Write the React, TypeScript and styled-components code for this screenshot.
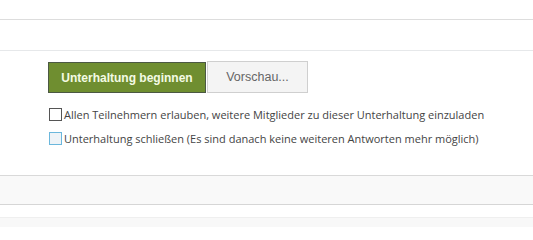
import React from "react";
import styled, { createGlobalStyle } from "styled-components";

const Global = createGlobalStyle`
  html, body { margin: 0; padding: 0; background: #ffffff; }
  body { font-family: "Open Sans", "Liberation Sans", sans-serif; }
`;

const Page = styled.div`
  width: 533px;
  height: 227px;
  overflow: hidden;
  display: flex;
  flex-direction: column;
`;

const Band = styled.div<{ $h: number; $bg?: string; $line?: string }>`
  height: ${(p) => p.$h}px;
  flex-shrink: 0;
  background: ${(p) => p.$bg || "#ffffff"};
  border-bottom: 1px solid ${(p) => p.$line || "transparent"};
`;

const Form = styled.div`
  height: 125px;
  flex-shrink: 0;
  padding: 11px 0 0 48px;
  box-sizing: border-box;
  border-bottom: 1px solid #d9d9d9;
`;

const ButtonRow = styled.div`
  display: flex;
  gap: 1px;
  height: 31px;
`;

const PrimaryButton = styled.button`
  width: 158px;
  height: 31px;
  margin: 0;
  padding: 0;
  background: #6f8e30;
  border: 1px solid #4b5843;
  color: #f4fbe4;
  font-family: "Liberation Sans", Arial, sans-serif;
  font-weight: bold;
  font-size: 12px;
  cursor: pointer;
`;

const SecondaryButton = styled.button`
  width: 101px;
  height: 32px;
  margin: -1px 0 0 0;
  padding: 0;
  background: #f4f4f4;
  border: 1px solid #cfcfcf;
  color: #666666;
  font-family: "Liberation Sans", Arial, sans-serif;
  font-size: 12.5px;
  cursor: pointer;
`;

const Options = styled.div`
  display: flex;
  flex-direction: column;
  gap: 11px;
  margin-top: 15px;
`;

const Option = styled.label`
  display: flex;
  align-items: center;
  gap: 2px;
  font-size: 11px;
  color: #444444;
  line-height: 13px;
  white-space: nowrap;
`;

const Box = styled.span<{ $focus?: boolean }>`
  width: 11px;
  height: 11px;
  flex-shrink: 0;
  border: 1px solid ${(p) => (p.$focus ? "#6bb7dc" : "#555555")};
  background: ${(p) => (p.$focus ? "#eef3f7" : "#ffffff")};
  margin-left: 1px;
`;

export default function App() {
  return (
    <Page>
      <Global />
      <Band $h={19} $line="#dddddd" />
      <Band $h={30} $line="#e6e8ea" />
      <Form>
        <ButtonRow>
          <PrimaryButton>Unterhaltung beginnen</PrimaryButton>
          <SecondaryButton>Vorschau...</SecondaryButton>
        </ButtonRow>
        <Options>
          <Option>
            <Box />
            Allen Teilnehmern erlauben, weitere Mitglieder zu dieser Unterhaltung einzuladen
          </Option>
          <Option>
            <Box $focus />
            Unterhaltung schließen (Es sind danach keine weiteren Antworten mehr möglich)
          </Option>
        </Options>
      </Form>
      <Band $h={28} $bg="#f9f9f9" $line="#d6d6d6" />
      <Band $h={12} $line="#efefef" />
      <Band $h={20} $bg="#f8f8f8" />
    </Page>
  );
}
